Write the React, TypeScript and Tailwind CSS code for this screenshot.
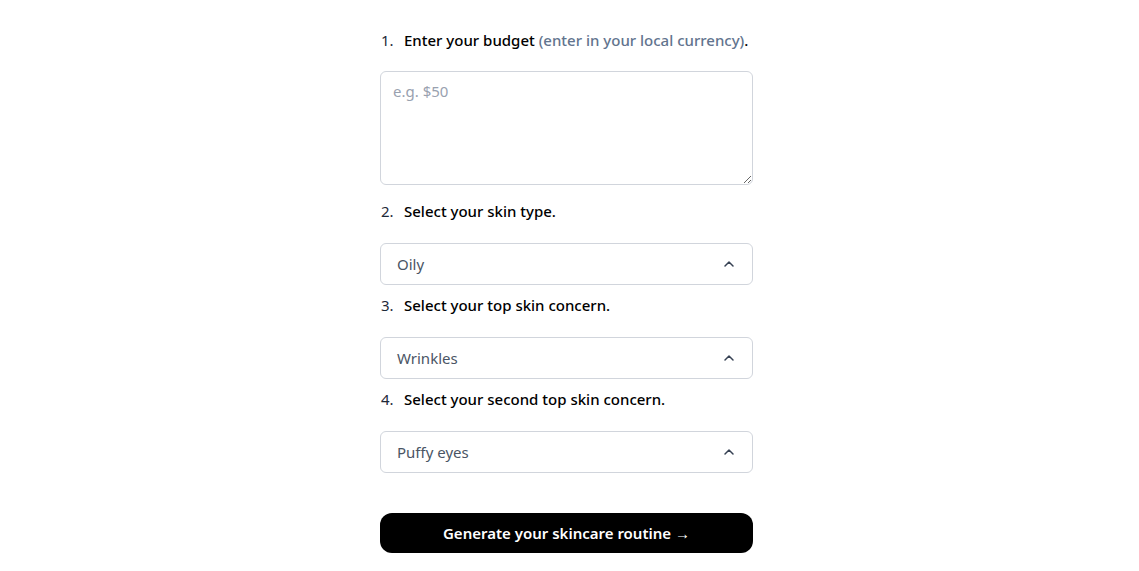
import React from "react";

function Chevron() {
  return (
    <svg width="16" height="16" viewBox="0 0 16 16" fill="none" className="text-gray-700">
      <path d="M4 10 L8 6 L12 10" stroke="currentColor" strokeWidth="1.5" strokeLinecap="round" strokeLinejoin="round" />
    </svg>
  );
}

function Label({ n, children }: { n: string; children: React.ReactNode }) {
  return (
    <div className="flex items-center whitespace-nowrap text-[15px] leading-6 text-black">
      <span className="w-6 pl-[1px] text-gray-800">{n}</span>
      <span className="font-medium">{children}</span>
    </div>
  );
}

function Select({ value }: { value: string }) {
  return (
    <div className="mt-[20px] flex h-[42px] w-full items-center justify-between rounded-md border border-gray-300 bg-white pl-4 pr-[15px] text-[15px] text-gray-600">
      <span>{value}</span>
      <Chevron />
    </div>
  );
}

export default function App() {
  return (
    <div className="min-h-[571px] bg-white" style={{ fontFamily: '"Noto Sans", "Open Sans", sans-serif' }}>
      <div className="flex justify-center pr-[6px]">
        <div className="w-[373px] pt-[28px]">
          <Label n="1.">
            Enter your budget <span className="text-slate-500">(enter in your local currency)</span>.
          </Label>
          <textarea
            className="mt-[19px] block h-[114px] w-full resize-y rounded-md border border-gray-300 px-3 py-2 text-[15px] text-gray-700 placeholder:text-gray-400"
            placeholder="e.g. $50"
          />
          <div className="mt-[14px]">
            <Label n="2.">Select your skin type.</Label>
          </div>
          <Select value="Oily" />
          <div className="mt-[8px]">
            <Label n="3.">Select your top skin concern.</Label>
          </div>
          <Select value="Wrinkles" />
          <div className="mt-[8px]">
            <Label n="4.">Select your second top skin concern.</Label>
          </div>
          <Select value="Puffy eyes" />
          <button className="mt-[40px] flex h-[40px] w-full items-center justify-center rounded-xl bg-black text-[15px] font-semibold text-white">
            Generate your skincare routine →
          </button>
        </div>
      </div>
    </div>
  );
}
